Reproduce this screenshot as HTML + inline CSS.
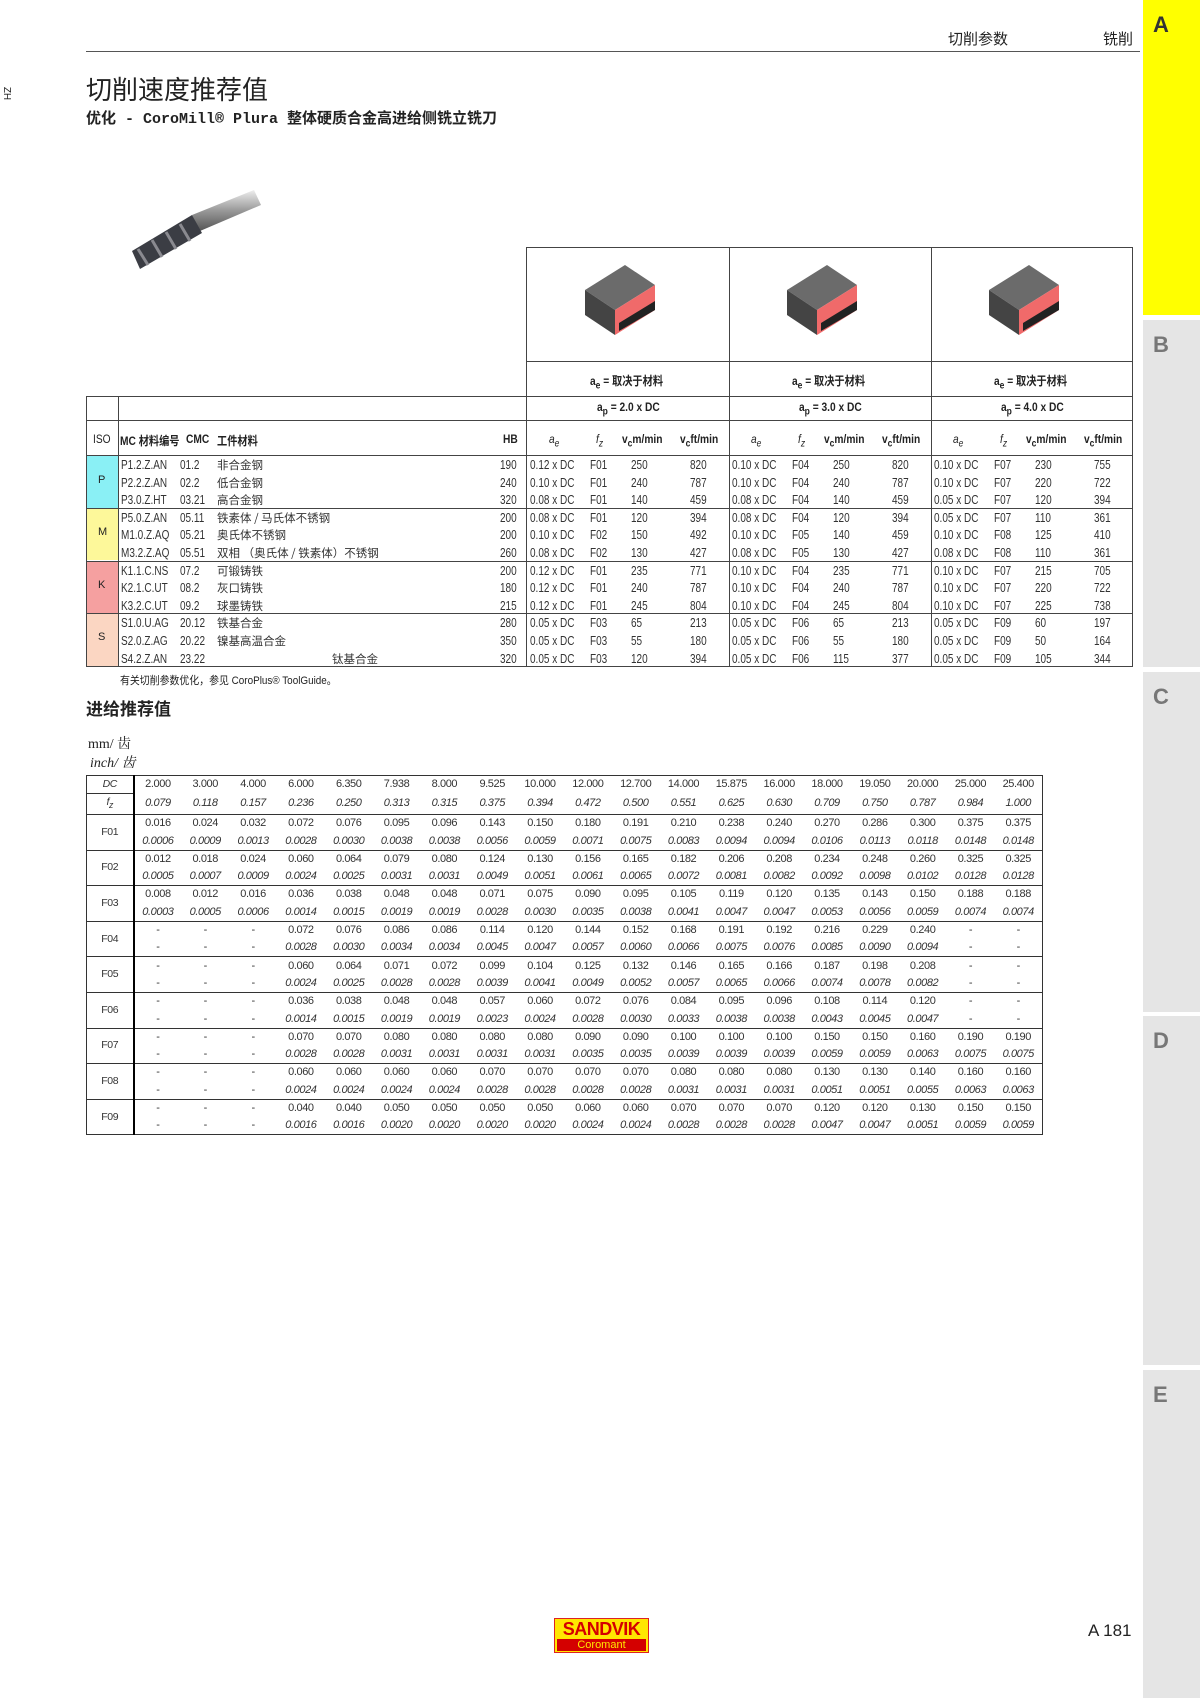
<!DOCTYPE html>
<html><head><meta charset="utf-8">
<style>
*{margin:0;padding:0;box-sizing:border-box}
body{width:1200px;height:1698px;position:relative;background:#fff;font-family:"Liberation Sans","Noto Sans CJK SC",sans-serif;color:#222;overflow:hidden}
.a{position:absolute;white-space:nowrap}
.tab{position:absolute;left:1143px;width:57px;background:#e5e5e5;font:bold 22px "Liberation Sans",sans-serif;color:#777;padding:12px 0 0 10px}
table{border-collapse:collapse;table-layout:fixed}
.ft{position:absolute;left:86px;top:775px;width:957px;font-size:11px;letter-spacing:-0.4px;text-align:center;color:#333}
.ft td{height:17.8px;padding:0;line-height:17px}
.ft i{font-style:italic}
.ft tr.r1 td{border-top:1px solid #333}
.ft td.h{border-right:2px solid #000;font-size:10.5px}
.cell{position:absolute;font-size:12.5px;line-height:17.6px;transform:scaleX(.8);transform-origin:0 0;color:#333}
.hd{position:absolute;font-size:12px;font-weight:bold;white-space:nowrap;transform:scaleX(.85);transform-origin:0 0}
.hd i{font-weight:normal}
</style></head><body>
<div class="tab" style="top:0;height:315px;background:#ffff00;color:#333">A</div>
<div class="tab" style="top:320px;height:347px">B</div>
<div class="tab" style="top:672px;height:340px">C</div>
<div class="tab" style="top:1016px;height:349px">D</div>
<div class="tab" style="top:1370px;height:328px">E</div>
<div class="a" style="left:0;top:88px;font-size:10px;transform:rotate(90deg)">ZH</div>

<div class="a" style="left:948px;top:28px;font-size:15px;font-family:'Noto Sans CJK SC',sans-serif">切削参数</div>
<div class="a" style="left:1103px;top:28px;font-size:15px;font-family:'Noto Sans CJK SC',sans-serif">铣削</div>
<div class="a" style="left:86px;top:51px;width:1054px;height:1px;background:#555"></div>

<div class="a" style="left:86px;top:70px;font-size:26px;font-family:'Noto Sans CJK SC',sans-serif">切削速度推荐值</div>
<div class="a" style="left:86px;top:107px;font-size:15px;font-weight:bold;font-family:'Liberation Mono','Noto Sans CJK SC',monospace">优化 - CoroMill® Plura 整体硬质合金高进给侧铣立铣刀</div>

<svg class="a" style="left:130px;top:185px" width="135" height="85" viewBox="0 0 135 85">
<defs><linearGradient id="g" x1="0" y1="0" x2="0" y2="1"><stop offset="0" stop-color="#eee"/><stop offset=".5" stop-color="#999"/><stop offset="1" stop-color="#555"/></linearGradient></defs>
<path d="M62 30 L124 5 L131 20 L70 46Z" fill="url(#g)"/>
<path d="M2 66 L62 30 L72 48 L10 84Z" fill="#3b3d44"/>
<path d="M8 64 L18 80 M22 55 L32 72 M36 47 L46 64 M50 39 L60 56" stroke="#8a8a90" stroke-width="3"/>
</svg>

<div class="a" style="left:526px;top:247px;width:607px;height:419px;border:1px solid #444;border-bottom:none"></div>
<div class="a" style="left:729px;top:247px;width:1px;height:419px;background:#444"></div>
<div class="a" style="left:931px;top:247px;width:1px;height:419px;background:#444"></div>
<div class="a" style="left:526px;top:361px;width:607px;height:1px;background:#444"></div>
<div class="a" style="left:86px;top:396px;width:1047px;height:1px;background:#444"></div>
<div class="a" style="left:86px;top:420px;width:1047px;height:1px;background:#444"></div>
<div class="a" style="left:86px;top:455px;width:1047px;height:1px;background:#444"></div>
<div class="a" style="left:86px;top:396px;width:1px;height:270px;background:#444"></div>
<div class="a" style="left:118px;top:396px;width:1px;height:270px;background:#444"></div>
<div class="a" style="left:86px;top:666px;width:1047px;height:1px;background:#444"></div>
<div class="a" style="left:87px;top:456px;width:31px;height:52px;background:#8af0f5"></div>
<div class="a" style="left:87px;top:508px;width:31px;height:52px;background:#fdf89a"></div>
<div class="a" style="left:87px;top:561px;width:31px;height:52px;background:#f5a0a0"></div>
<div class="a" style="left:87px;top:614px;width:31px;height:52px;background:#fbd6c2"></div>
<div class="a" style="left:86px;top:508px;width:1047px;height:1px;background:#444"></div>
<div class="a" style="left:86px;top:561px;width:1047px;height:1px;background:#444"></div>
<div class="a" style="left:86px;top:613px;width:1047px;height:1px;background:#444"></div>
<div class="a" style="left:98px;top:474px;font-size:11px">P</div>
<div class="a" style="left:98px;top:526px;font-size:11px">M</div>
<div class="a" style="left:98px;top:579px;font-size:11px">K</div>
<div class="a" style="left:98px;top:631px;font-size:11px">S</div>

<svg class="a" style="left:585px;top:265px" width="70" height="70" viewBox="0 0 70 70"><path d="M0 25 L40 0 L70 20 L30 45Z" fill="#6b6b6b"/><path d="M0 25 L30 45 L30 70 L0 50Z" fill="#444"/><path d="M30 45 L70 20 L70 45 L30 70Z" fill="#f06a6a"/><path d="M34 58 L70 36 L70 45 L34 66Z" fill="#222"/></svg>
<svg class="a" style="left:787px;top:265px" width="70" height="70" viewBox="0 0 70 70"><path d="M0 25 L40 0 L70 20 L30 45Z" fill="#6b6b6b"/><path d="M0 25 L30 45 L30 70 L0 50Z" fill="#444"/><path d="M30 45 L70 20 L70 45 L30 70Z" fill="#f06a6a"/><path d="M34 58 L70 36 L70 45 L34 66Z" fill="#222"/></svg>
<svg class="a" style="left:989px;top:265px" width="70" height="70" viewBox="0 0 70 70"><path d="M0 25 L40 0 L70 20 L30 45Z" fill="#6b6b6b"/><path d="M0 25 L30 45 L30 70 L0 50Z" fill="#444"/><path d="M30 45 L70 20 L70 45 L30 70Z" fill="#f06a6a"/><path d="M34 58 L70 36 L70 45 L34 66Z" fill="#222"/></svg>

<div class="hd" style="left:590px;top:372px">a<sub>e</sub> = 取决于材料</div>
<div class="hd" style="left:792px;top:372px">a<sub>e</sub> = 取决于材料</div>
<div class="hd" style="left:994px;top:372px">a<sub>e</sub> = 取决于材料</div>
<div class="hd" style="left:597px;top:400px">a<sub>p</sub> = 2.0 x DC</div>
<div class="hd" style="left:799px;top:400px">a<sub>p</sub> = 3.0 x DC</div>
<div class="hd" style="left:1001px;top:400px">a<sub>p</sub> = 4.0 x DC</div>

<div class="hd" style="left:93px;top:432px;font-weight:normal">ISO</div>
<div class="hd" style="left:120px;top:432px">MC 材料编号</div>
<div class="hd" style="left:186px;top:432px">CMC</div>
<div class="hd" style="left:217px;top:432px">工件材料</div>
<div class="hd" style="left:503px;top:432px">HB</div>

<div class="hd" style="left:549px;top:432px"><i>a<sub>e</sub></i></div><div class="hd" style="left:596px;top:432px"><i>f<sub>z</sub></i></div><div class="hd" style="left:622px;top:432px">v<sub>c</sub>m/min</div><div class="hd" style="left:680px;top:432px">v<sub>c</sub>ft/min</div>
<div class="hd" style="left:751px;top:432px"><i>a<sub>e</sub></i></div><div class="hd" style="left:798px;top:432px"><i>f<sub>z</sub></i></div><div class="hd" style="left:824px;top:432px">v<sub>c</sub>m/min</div><div class="hd" style="left:882px;top:432px">v<sub>c</sub>ft/min</div>
<div class="hd" style="left:953px;top:432px"><i>a<sub>e</sub></i></div><div class="hd" style="left:1000px;top:432px"><i>f<sub>z</sub></i></div><div class="hd" style="left:1026px;top:432px">v<sub>c</sub>m/min</div><div class="hd" style="left:1084px;top:432px">v<sub>c</sub>ft/min</div>

<div class="cell" style="left:121px;top:457px">P1.2.Z.AN<br>P2.2.Z.AN<br>P3.0.Z.HT<br>P5.0.Z.AN<br>M1.0.Z.AQ<br>M3.2.Z.AQ<br>K1.1.C.NS<br>K2.1.C.UT<br>K3.2.C.UT<br>S1.0.U.AG<br>S2.0.Z.AG<br>S4.2.Z.AN</div>
<div class="cell" style="left:180px;top:457px">01.2<br>02.2<br>03.21<br>05.11<br>05.21<br>05.51<br>07.2<br>08.2<br>09.2<br>20.12<br>20.22<br>23.22</div>
<div class="cell" style="left:217px;top:457px;font-family:'Noto Sans CJK SC',sans-serif;font-size:11.5px;transform:none">非合金钢<br>低合金钢<br>高合金钢<br>铁素体 / 马氏体不锈钢<br>奥氏体不锈钢<br>双相 （奥氏体 / 铁素体）不锈钢<br>可锻铸铁<br>灰口铸铁<br>球墨铸铁<br>铁基合金<br>镍基高温合金<br><span style="padding-left:115px">钛基合金</span></div>
<div class="cell" style="left:500px;top:457px">190<br>240<br>320<br>200<br>200<br>260<br>200<br>180<br>215<br>280<br>350<br>320</div>

<div class="cell" style="left:530px;top:457px">0.12 x DC<br>0.10 x DC<br>0.08 x DC<br>0.08 x DC<br>0.10 x DC<br>0.08 x DC<br>0.12 x DC<br>0.12 x DC<br>0.12 x DC<br>0.05 x DC<br>0.05 x DC<br>0.05 x DC</div>
<div class="cell" style="left:590px;top:457px">F01<br>F01<br>F01<br>F01<br>F02<br>F02<br>F01<br>F01<br>F01<br>F03<br>F03<br>F03</div>
<div class="cell" style="left:631px;top:457px">250<br>240<br>140<br>120<br>150<br>130<br>235<br>240<br>245<br>65<br>55<br>120</div>
<div class="cell" style="left:690px;top:457px">820<br>787<br>459<br>394<br>492<br>427<br>771<br>787<br>804<br>213<br>180<br>394</div>

<div class="cell" style="left:732px;top:457px">0.10 x DC<br>0.10 x DC<br>0.08 x DC<br>0.08 x DC<br>0.10 x DC<br>0.08 x DC<br>0.10 x DC<br>0.10 x DC<br>0.10 x DC<br>0.05 x DC<br>0.05 x DC<br>0.05 x DC</div>
<div class="cell" style="left:792px;top:457px">F04<br>F04<br>F04<br>F04<br>F05<br>F05<br>F04<br>F04<br>F04<br>F06<br>F06<br>F06</div>
<div class="cell" style="left:833px;top:457px">250<br>240<br>140<br>120<br>140<br>130<br>235<br>240<br>245<br>65<br>55<br>115</div>
<div class="cell" style="left:892px;top:457px">820<br>787<br>459<br>394<br>459<br>427<br>771<br>787<br>804<br>213<br>180<br>377</div>

<div class="cell" style="left:934px;top:457px">0.10 x DC<br>0.10 x DC<br>0.05 x DC<br>0.05 x DC<br>0.10 x DC<br>0.08 x DC<br>0.10 x DC<br>0.10 x DC<br>0.10 x DC<br>0.05 x DC<br>0.05 x DC<br>0.05 x DC</div>
<div class="cell" style="left:994px;top:457px">F07<br>F07<br>F07<br>F07<br>F08<br>F08<br>F07<br>F07<br>F07<br>F09<br>F09<br>F09</div>
<div class="cell" style="left:1035px;top:457px">230<br>220<br>120<br>110<br>125<br>110<br>215<br>220<br>225<br>60<br>50<br>105</div>
<div class="cell" style="left:1094px;top:457px">755<br>722<br>394<br>361<br>410<br>361<br>705<br>722<br>738<br>197<br>164<br>344</div>

<div class="a" style="left:120px;top:672px;font-size:11px;transform:scaleX(.9);transform-origin:0 0">有关切削参数优化，参见 CoroPlus® ToolGuide。</div>

<div class="a" style="left:86px;top:695px;font-size:17px;font-weight:bold;font-family:'Noto Sans CJK SC',sans-serif">进给推荐值</div>
<div class="a" style="left:88px;top:733px;font-size:14px;font-family:'Liberation Serif','Noto Serif CJK SC',serif">mm/ 齿</div>
<div class="a" style="left:90px;top:752px;font-size:14px;font-style:italic;font-family:'Liberation Serif','Noto Serif CJK SC',serif">inch/ 齿</div>

<table class="ft" style="border:1px solid #333">
<colgroup><col style="width:47px"><col span="19"></colgroup>
<tr><td class="h"><i>DC</i></td><td>2.000</td><td>3.000</td><td>4.000</td><td>6.000</td><td>6.350</td><td>7.938</td><td>8.000</td><td>9.525</td><td>10.000</td><td>12.000</td><td>12.700</td><td>14.000</td><td>15.875</td><td>16.000</td><td>18.000</td><td>19.050</td><td>20.000</td><td>25.000</td><td>25.400</td></tr>
<tr><td class="h" style="border-top:1px solid #333"><i>f<sub>z</sub></i></td><td><i>0.079</i></td><td><i>0.118</i></td><td><i>0.157</i></td><td><i>0.236</i></td><td><i>0.250</i></td><td><i>0.313</i></td><td><i>0.315</i></td><td><i>0.375</i></td><td><i>0.394</i></td><td><i>0.472</i></td><td><i>0.500</i></td><td><i>0.551</i></td><td><i>0.625</i></td><td><i>0.630</i></td><td><i>0.709</i></td><td><i>0.750</i></td><td><i>0.787</i></td><td><i>0.984</i></td><td><i>1.000</i></td></tr>
<tr class="r1"><td class="h" rowspan="2">F01</td><td>0.016</td><td>0.024</td><td>0.032</td><td>0.072</td><td>0.076</td><td>0.095</td><td>0.096</td><td>0.143</td><td>0.150</td><td>0.180</td><td>0.191</td><td>0.210</td><td>0.238</td><td>0.240</td><td>0.270</td><td>0.286</td><td>0.300</td><td>0.375</td><td>0.375</td></tr>
<tr><td><i>0.0006</i></td><td><i>0.0009</i></td><td><i>0.0013</i></td><td><i>0.0028</i></td><td><i>0.0030</i></td><td><i>0.0038</i></td><td><i>0.0038</i></td><td><i>0.0056</i></td><td><i>0.0059</i></td><td><i>0.0071</i></td><td><i>0.0075</i></td><td><i>0.0083</i></td><td><i>0.0094</i></td><td><i>0.0094</i></td><td><i>0.0106</i></td><td><i>0.0113</i></td><td><i>0.0118</i></td><td><i>0.0148</i></td><td><i>0.0148</i></td></tr>
<tr class="r1"><td class="h" rowspan="2">F02</td><td>0.012</td><td>0.018</td><td>0.024</td><td>0.060</td><td>0.064</td><td>0.079</td><td>0.080</td><td>0.124</td><td>0.130</td><td>0.156</td><td>0.165</td><td>0.182</td><td>0.206</td><td>0.208</td><td>0.234</td><td>0.248</td><td>0.260</td><td>0.325</td><td>0.325</td></tr>
<tr><td><i>0.0005</i></td><td><i>0.0007</i></td><td><i>0.0009</i></td><td><i>0.0024</i></td><td><i>0.0025</i></td><td><i>0.0031</i></td><td><i>0.0031</i></td><td><i>0.0049</i></td><td><i>0.0051</i></td><td><i>0.0061</i></td><td><i>0.0065</i></td><td><i>0.0072</i></td><td><i>0.0081</i></td><td><i>0.0082</i></td><td><i>0.0092</i></td><td><i>0.0098</i></td><td><i>0.0102</i></td><td><i>0.0128</i></td><td><i>0.0128</i></td></tr>
<tr class="r1"><td class="h" rowspan="2">F03</td><td>0.008</td><td>0.012</td><td>0.016</td><td>0.036</td><td>0.038</td><td>0.048</td><td>0.048</td><td>0.071</td><td>0.075</td><td>0.090</td><td>0.095</td><td>0.105</td><td>0.119</td><td>0.120</td><td>0.135</td><td>0.143</td><td>0.150</td><td>0.188</td><td>0.188</td></tr>
<tr><td><i>0.0003</i></td><td><i>0.0005</i></td><td><i>0.0006</i></td><td><i>0.0014</i></td><td><i>0.0015</i></td><td><i>0.0019</i></td><td><i>0.0019</i></td><td><i>0.0028</i></td><td><i>0.0030</i></td><td><i>0.0035</i></td><td><i>0.0038</i></td><td><i>0.0041</i></td><td><i>0.0047</i></td><td><i>0.0047</i></td><td><i>0.0053</i></td><td><i>0.0056</i></td><td><i>0.0059</i></td><td><i>0.0074</i></td><td><i>0.0074</i></td></tr>
<tr class="r1"><td class="h" rowspan="2">F04</td><td>-</td><td>-</td><td>-</td><td>0.072</td><td>0.076</td><td>0.086</td><td>0.086</td><td>0.114</td><td>0.120</td><td>0.144</td><td>0.152</td><td>0.168</td><td>0.191</td><td>0.192</td><td>0.216</td><td>0.229</td><td>0.240</td><td>-</td><td>-</td></tr>
<tr><td>-</td><td>-</td><td>-</td><td><i>0.0028</i></td><td><i>0.0030</i></td><td><i>0.0034</i></td><td><i>0.0034</i></td><td><i>0.0045</i></td><td><i>0.0047</i></td><td><i>0.0057</i></td><td><i>0.0060</i></td><td><i>0.0066</i></td><td><i>0.0075</i></td><td><i>0.0076</i></td><td><i>0.0085</i></td><td><i>0.0090</i></td><td><i>0.0094</i></td><td>-</td><td>-</td></tr>
<tr class="r1"><td class="h" rowspan="2">F05</td><td>-</td><td>-</td><td>-</td><td>0.060</td><td>0.064</td><td>0.071</td><td>0.072</td><td>0.099</td><td>0.104</td><td>0.125</td><td>0.132</td><td>0.146</td><td>0.165</td><td>0.166</td><td>0.187</td><td>0.198</td><td>0.208</td><td>-</td><td>-</td></tr>
<tr><td>-</td><td>-</td><td>-</td><td><i>0.0024</i></td><td><i>0.0025</i></td><td><i>0.0028</i></td><td><i>0.0028</i></td><td><i>0.0039</i></td><td><i>0.0041</i></td><td><i>0.0049</i></td><td><i>0.0052</i></td><td><i>0.0057</i></td><td><i>0.0065</i></td><td><i>0.0066</i></td><td><i>0.0074</i></td><td><i>0.0078</i></td><td><i>0.0082</i></td><td>-</td><td>-</td></tr>
<tr class="r1"><td class="h" rowspan="2">F06</td><td>-</td><td>-</td><td>-</td><td>0.036</td><td>0.038</td><td>0.048</td><td>0.048</td><td>0.057</td><td>0.060</td><td>0.072</td><td>0.076</td><td>0.084</td><td>0.095</td><td>0.096</td><td>0.108</td><td>0.114</td><td>0.120</td><td>-</td><td>-</td></tr>
<tr><td>-</td><td>-</td><td>-</td><td><i>0.0014</i></td><td><i>0.0015</i></td><td><i>0.0019</i></td><td><i>0.0019</i></td><td><i>0.0023</i></td><td><i>0.0024</i></td><td><i>0.0028</i></td><td><i>0.0030</i></td><td><i>0.0033</i></td><td><i>0.0038</i></td><td><i>0.0038</i></td><td><i>0.0043</i></td><td><i>0.0045</i></td><td><i>0.0047</i></td><td>-</td><td>-</td></tr>
<tr class="r1"><td class="h" rowspan="2">F07</td><td>-</td><td>-</td><td>-</td><td>0.070</td><td>0.070</td><td>0.080</td><td>0.080</td><td>0.080</td><td>0.080</td><td>0.090</td><td>0.090</td><td>0.100</td><td>0.100</td><td>0.100</td><td>0.150</td><td>0.150</td><td>0.160</td><td>0.190</td><td>0.190</td></tr>
<tr><td>-</td><td>-</td><td>-</td><td><i>0.0028</i></td><td><i>0.0028</i></td><td><i>0.0031</i></td><td><i>0.0031</i></td><td><i>0.0031</i></td><td><i>0.0031</i></td><td><i>0.0035</i></td><td><i>0.0035</i></td><td><i>0.0039</i></td><td><i>0.0039</i></td><td><i>0.0039</i></td><td><i>0.0059</i></td><td><i>0.0059</i></td><td><i>0.0063</i></td><td><i>0.0075</i></td><td><i>0.0075</i></td></tr>
<tr class="r1"><td class="h" rowspan="2">F08</td><td>-</td><td>-</td><td>-</td><td>0.060</td><td>0.060</td><td>0.060</td><td>0.060</td><td>0.070</td><td>0.070</td><td>0.070</td><td>0.070</td><td>0.080</td><td>0.080</td><td>0.080</td><td>0.130</td><td>0.130</td><td>0.140</td><td>0.160</td><td>0.160</td></tr>
<tr><td>-</td><td>-</td><td>-</td><td><i>0.0024</i></td><td><i>0.0024</i></td><td><i>0.0024</i></td><td><i>0.0024</i></td><td><i>0.0028</i></td><td><i>0.0028</i></td><td><i>0.0028</i></td><td><i>0.0028</i></td><td><i>0.0031</i></td><td><i>0.0031</i></td><td><i>0.0031</i></td><td><i>0.0051</i></td><td><i>0.0051</i></td><td><i>0.0055</i></td><td><i>0.0063</i></td><td><i>0.0063</i></td></tr>
<tr class="r1"><td class="h" rowspan="2">F09</td><td>-</td><td>-</td><td>-</td><td>0.040</td><td>0.040</td><td>0.050</td><td>0.050</td><td>0.050</td><td>0.050</td><td>0.060</td><td>0.060</td><td>0.070</td><td>0.070</td><td>0.070</td><td>0.120</td><td>0.120</td><td>0.130</td><td>0.150</td><td>0.150</td></tr>
<tr><td>-</td><td>-</td><td>-</td><td><i>0.0016</i></td><td><i>0.0016</i></td><td><i>0.0020</i></td><td><i>0.0020</i></td><td><i>0.0020</i></td><td><i>0.0020</i></td><td><i>0.0024</i></td><td><i>0.0024</i></td><td><i>0.0028</i></td><td><i>0.0028</i></td><td><i>0.0028</i></td><td><i>0.0047</i></td><td><i>0.0047</i></td><td><i>0.0051</i></td><td><i>0.0059</i></td><td><i>0.0059</i></td></tr>
</table>

<div class="a" style="left:554px;top:1618px;width:95px;height:35px;background:#ffe600;border:1px solid #d22">
<div style="text-align:center;font:bold 18px/20px 'Liberation Sans',sans-serif;color:#d40000;letter-spacing:-0.5px">SANDVIK</div>
<div style="margin:0 2px;background:#d40000;color:#ffe600;text-align:center;font:11px/12px 'Liberation Sans',sans-serif">Coromant</div>
</div>
<div class="a" style="left:1088px;top:1621px;font:17px 'Liberation Sans',sans-serif">A 181</div>
</body></html>
